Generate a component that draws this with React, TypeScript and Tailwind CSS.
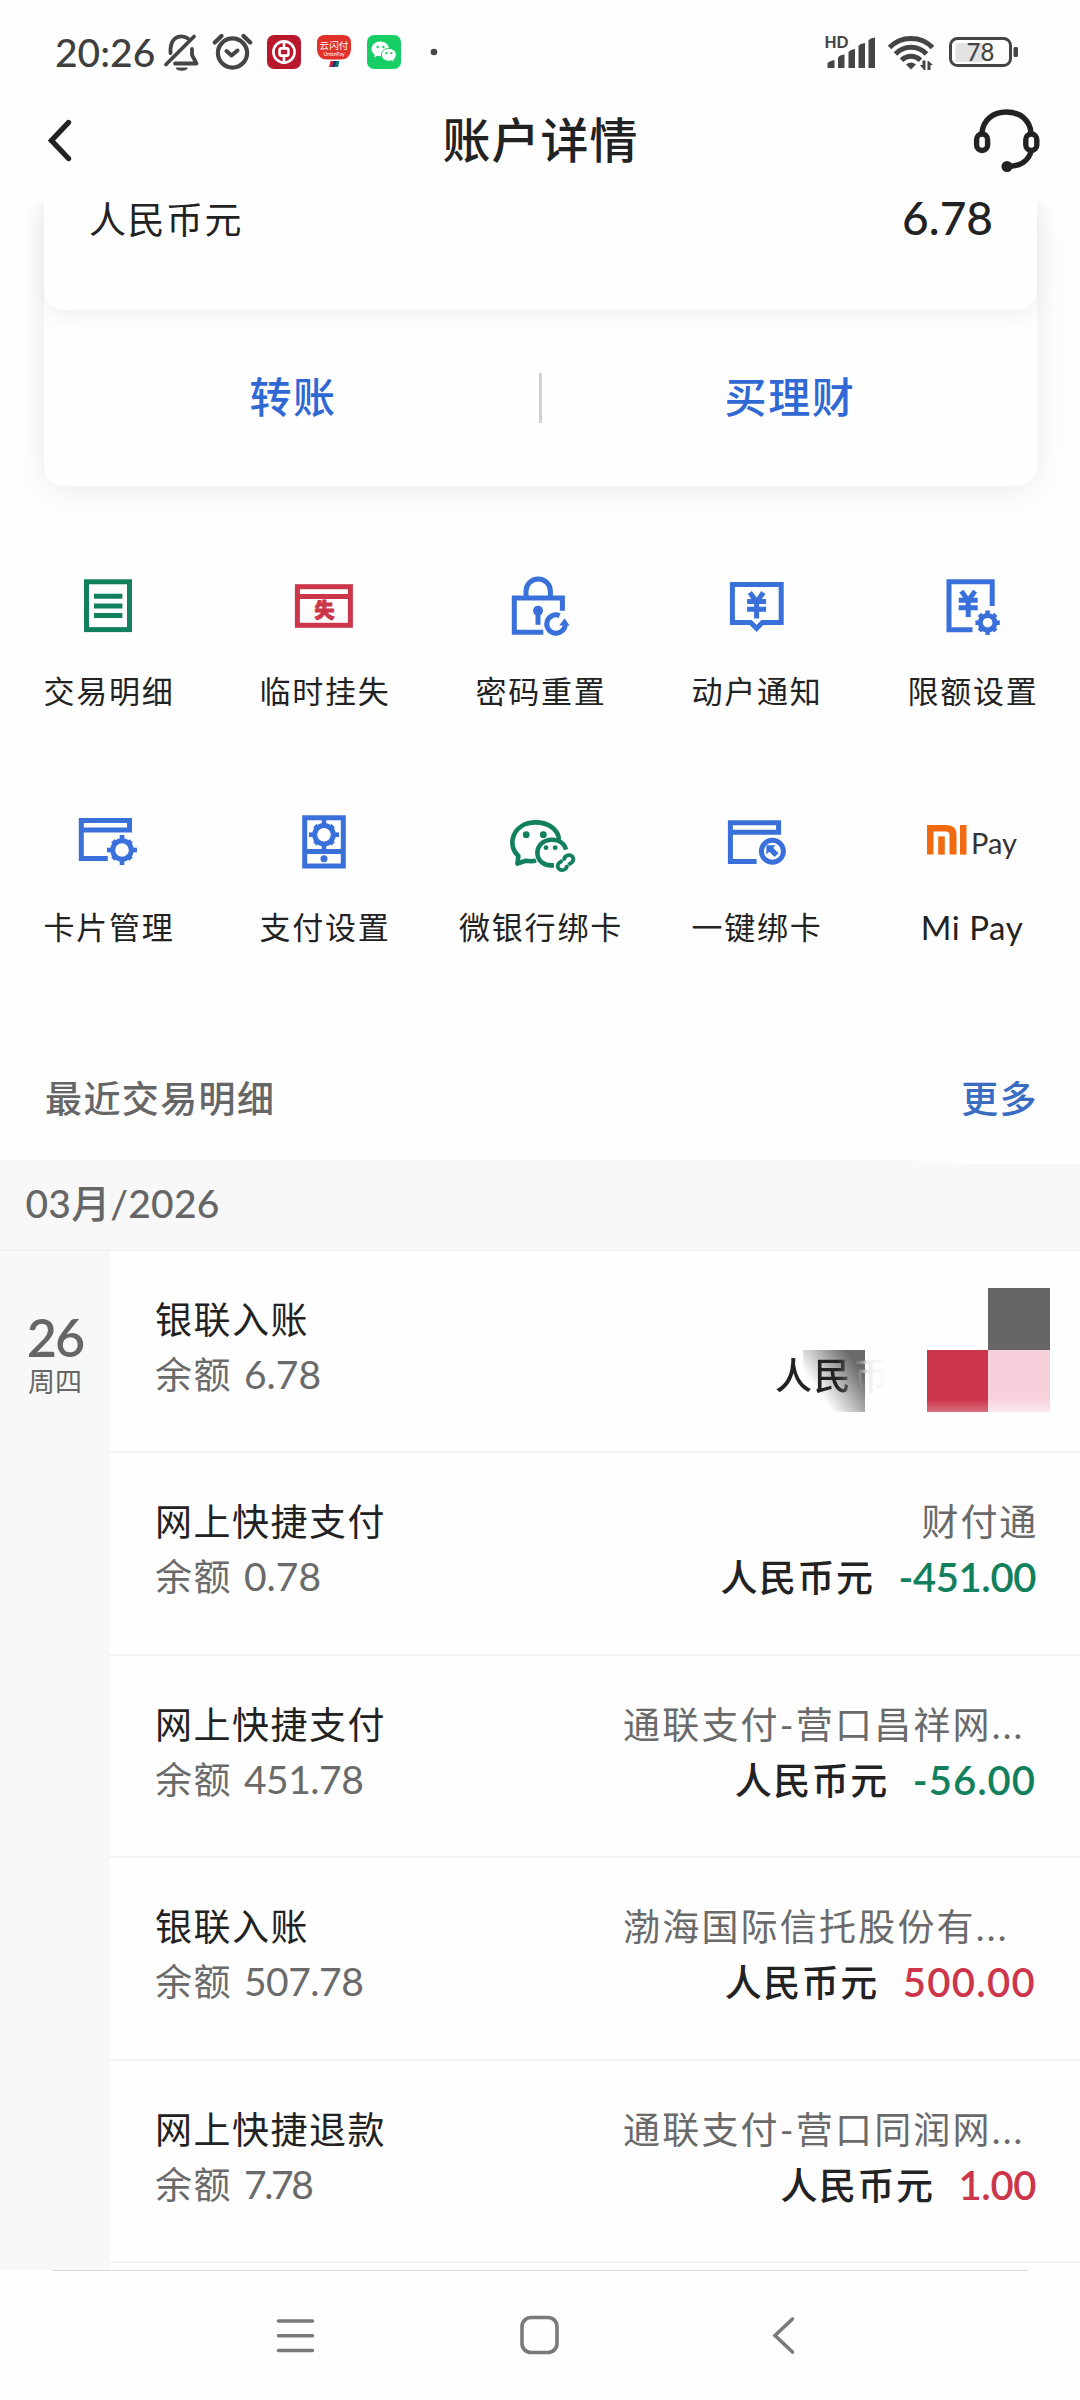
import React from "react";

const BLUE = "#3a70da";
const GREEN = "#12805e";
const RED = "#cc364b";

function Gear({ cx, cy, r, inner, tooth, outer }: { cx: number; cy: number; r: number; inner: number; tooth: number; outer: number }) {
  const mid = (r + inner) / 2;
  return (
    <g stroke={BLUE} fill="none">
      <circle cx={cx} cy={cy} r={mid} strokeWidth={r - inner} />
      {[0, 45, 90, 135, 180, 225, 270, 315].map((a) => (
        <line
          key={a}
          x1={cx}
          y1={cy - mid}
          x2={cx}
          y2={cy - (a % 90 === 0 ? outer : tooth)}
          strokeWidth={4.6}
          transform={`rotate(${a} ${cx} ${cy})`}
        />
      ))}
    </g>
  );
}

function Yen({ x, y }: { x: number; y: number }) {
  return (
    <g transform={`translate(${x} ${y})`} stroke={BLUE} strokeWidth={5} fill="none">
      <path d="M-6.8 -12.5 L0 -3 L6.8 -12.5 M0 -4 V13.5 M-9.5 -3.4 H9.5 M-9.5 4.2 H9.5" />
    </g>
  );
}

const icons: Record<string, React.ReactNode> = {
  detail: (
    <g stroke={GREEN} strokeWidth={5} fill="none">
      <rect x={10.5} y={7.8} width={43} height={47.8} />
      <path d="M18 22.3H46.4M18 32H46.4M18 41.5H46.4" />
    </g>
  ),
  lost: (
    <g>
      <rect x={5.4} y={12.7} width={53} height={38.6} stroke={RED} strokeWidth={5} fill="none" />
      <path d="M5.4 22.4H58.4" stroke={RED} strokeWidth={5} />
      <text x={32.5} y={44.4} textAnchor="middle" fontSize={20} fontWeight={900} fill={RED} stroke={RED} strokeWidth={0.9}>失</text>
    </g>
  ),
  lock: (
    <g stroke={BLUE} strokeWidth={5} fill="none">
      <path d="M54.4 36.7V24.1H6.3V58.3H35.3" />
      <path d="M18 24V17.2a12.2 12.2 0 0 1 24.4 0V24" />
      <circle cx={30} cy={36.7} r={5} fill={BLUE} stroke="none" />
      <path d="M30 38V50.8" />
      <path d="M51.6 41.6A9.2 9.2 0 1 0 57.2 50" />
      <path d="M56.6 44.2L61.6 51.4H51.2Z" fill={BLUE} stroke="none" />
    </g>
  ),
  notice: (
    <g>
      <path d="M8.4 10.4H57.2V48.4H38.4L32.6 54.4L26.6 48.4H8.4Z" stroke={BLUE} strokeWidth={5} fill="none" />
      <Yen x={32.6} y={31} />
    </g>
  ),
  limit: (
    <g>
      <path d="M52.2 32V7.7H9V55.7H32.5" stroke={BLUE} strokeWidth={5} fill="none" />
      <Yen x={28.2} y={29.6} />
      <Gear cx={47.6} cy={48.7} r={9.8} inner={4.8} tooth={11.6} outer={12.2} />
    </g>
  ),
  card: (
    <g>
      <path d="M31.8 48.6H5.3V10.4H53.5V19.9H5.3" stroke={BLUE} strokeWidth={5} fill="none" />
      <Gear cx={46} cy={40} r={11.8} inner={6.8} tooth={13} outer={15} />
    </g>
  ),
  pay: (
    <g>
      <path d="M12.7 7.7H51.3V55.9H12.7ZM12.7 41.5H51.3" stroke={BLUE} strokeWidth={5} fill="none" />
      <circle cx={32} cy={48.7} r={3.5} fill={BLUE} />
      <Gear cx={32} cy={24.7} r={11.8} inner={6.8} tooth={13} outer={15} />
    </g>
  ),
  wechat: (
    <g stroke={GREEN} strokeWidth={4.6} fill="none" strokeLinejoin="round">
      <path d="M28 50.4C25 51.6 20 51.2 17.6 50.8L9.4 53.6L10.4 46C-2 35 5 12.4 27.6 12.4C41 12.4 50.4 20 51 29.6" />
      <path d="M58 39.6C56.4 33.6 51 29.7 44 29.7C35 29.7 29.4 35.8 29.4 43C29.4 51 36.6 56.4 46 55.2" />
      <circle cx={18.2} cy={24.7} r={3.4} fill={GREEN} stroke="none" />
      <circle cx={35.3} cy={24.7} r={3.4} fill={GREEN} stroke="none" />
      <circle cx={38} cy={37.7} r={2.4} fill={GREEN} stroke="none" />
      <circle cx={47.2} cy={37.7} r={2.4} fill={GREEN} stroke="none" />
      <path d="M56.4 50.6C55.4 47.6 58.4 45 61.4 45.2C65.4 45.6 66.4 50 64 52.2L60.600 54.800" strokeWidth={3.800} />
      <path d="M58.600 54.800C59.600 58 56.800 60.400 53.600 60.200C49.600 59.600 48.600 55.400 51 53L54.400 50.400" strokeWidth={3.800} />
    </g>
  ),
  bind: (
    <g>
      <path d="M32.6 51.4H6.4V12.7H54.6V22.3H6.4" stroke={BLUE} strokeWidth={5} fill="none" />
      <circle cx={48.4} cy={41.3} r={11} stroke={BLUE} strokeWidth={5} fill="none" />
      <path d="M42.4 35.2H51.6L49.2 37.8L54.6 43.2L50.6 47L45.2 41.8L42.4 44.4Z" fill={BLUE} />
    </g>
  ),
};

function ServiceIcon({ name }: { name: string }) {
  if (name === "mipay") {
    return (
      <div className="flex h-16 w-[92px] items-start pt-[15px]">
        <svg width={40} height={30} viewBox="0 0 40 30" className="ml-[1px] shrink-0">
          <g fill="#f26a10">
            <path d="M0 0H19C26 0 29.500 3.400 29.500 9.600V29.600H22.500V10.500C22.500 7.500 21.500 6.500 18.600 6.500H6.500V29.600H0Z" />
            <rect x={11.200} y={11.400} width={6.600} height={18.200} />
            <rect x={33} y={0} width={6.500} height={29.600} />
          </g>
        </svg>
        <span className="ml-[4px] mt-[2px] text-[29px] leading-[32px] text-[#333]">Pay</span>
      </div>
    );
  }
  return (
    <svg width={64} height={64} viewBox="0 0 64 64" className="overflow-visible">
      {icons[name]}
    </svg>
  );
}

const services = [
  [
    ["detail", "交易明细"],
    ["lost", "临时挂失"],
    ["lock", "密码重置"],
    ["notice", "动户通知"],
    ["limit", "限额设置"],
  ],
  [
    ["card", "卡片管理"],
    ["pay", "支付设置"],
    ["wechat", "微银行绑卡"],
    ["bind", "一键绑卡"],
    ["mipay", "Mi Pay"],
  ],
];

const transactions = [
  { title: "银联入账", balance: "6.78", balanceFit: "", payee: "", amount: "", amountFit: "" },
  { title: "网上快捷支付", balance: "0.78", balanceFit: "", payee: "财付通", amount: "-451.00", amountFit: "text-[#12805c] tracking-[-0.4px]" },
  { title: "网上快捷支付", balance: "451.78", balanceFit: "tracking-[-0.5px]", payee: "通联支付-营口昌祥网...", amount: "-56.00", amountFit: "text-[#12805c] tracking-[1px]" },
  { title: "银联入账", balance: "507.78", balanceFit: "tracking-[-0.5px]", payee: "渤海国际信托股份有...", amount: "500.00", amountFit: "text-[#cc364b] tracking-[1.3px]" },
  { title: "网上快捷退款", balance: "7.78", balanceFit: "tracking-[-2.4px]", payee: "通联支付-营口同润网...", amount: "1.00", amountFit: "text-[#cc364b] tracking-[-0.4px]" },
];

function StatusBar() {
  return (
    <div className="flex h-[81px] items-start justify-between">
      <div className="flex items-start pl-[55px] pt-[31px]">
        <span className="w-[108px] text-[39px] font-medium leading-[42px] text-[#3f3f3f]">20:26</span>
        <svg width={290} height={44} viewBox="163 31 290 44">
          <g stroke="#454545" fill="none" strokeWidth={3.8} strokeLinecap="round" strokeLinejoin="round">
            <path d="M166 64.5L194 36.5" />
            <path d="M170.5 53V49C171 41 175 36.3 181.500 36.300C184 36.300 186 37 188 38.500" />
            <path d="M192 49V55L196.500 63.500H175" />
            <path d="M176.500 68.200H187C185.500 70.800 178 70.800 176.500 68.200Z" fill="#454545" strokeWidth={1.200} />
            <circle cx={232.5} cy={53} r={14.6} strokeWidth={4.2} />
            <path d="M226.500 51L231.500 55.500L237.500 50.500" strokeWidth={4} />
            <path d="M214.800 42.500L221.500 36M250.200 42.500L243.500 36" strokeWidth={4.4} />
          </g>
          <rect x={267} y={35} width={34} height={34} rx={7} fill="#b9182c" />
          <g stroke="#fff" fill="none" strokeWidth={2.6}>
            <circle cx={284} cy={52} r={10.6} />
            <rect x={279.6} y={48.4} width={8.8} height={7.2} rx={1.6} />
            <path d="M284 41V48.400M284 55.600V63" />
          </g>
          <path d="M317 43Q317 35 325 35H343Q351 35 351 43V50Q350 59.500 341 59.500H327Q318 59.500 317 50Z" fill="#e2312b" />
          <text x={334} y={48.6} textAnchor="middle" fontSize={9.6} fontWeight={400} fill="#fff">云闪付</text>
          <text x={334} y={55.6} textAnchor="middle" fontSize={5} fill="#fff">UnionPay</text>
          <path d="M330.500 61H334L332.500 67H329Z" fill="#c9223a" />
          <path d="M333.500 61H337L335.500 67H332Z" fill="#1c3a72" />
          <path d="M336.500 61H339.500L338 67H335Z" fill="#0e7a72" />
          <rect x={367} y={35} width={34} height={34} rx={7} fill="#15cf66" />
          <g fill="#fff">
            <path d="M380.300 41.500C375.400 41.500 371.600 44.800 371.600 48.900C371.600 51.200 372.800 53.200 374.700 54.600L374 57.400L377.200 55.800C378.200 56.100 379.200 56.200 380.300 56.200C385.200 56.200 389 52.900 389 48.900C389 44.800 385.200 41.500 380.300 41.500Z" />
            <path d="M388.800 48.400C384.600 48.400 381.400 51.200 381.400 54.800C381.400 58.400 384.600 61.200 388.800 61.200C389.800 61.200 390.700 61 391.500 60.800L394.300 62.200L393.700 59.800C395.300 58.600 396.300 56.800 396.300 54.800C396.300 51.200 393 48.400 388.800 48.400Z" stroke="#15cf66" strokeWidth={1} />
          </g>
          <g fill="#15cf66">
            <circle cx={377.600} cy={47} r={1.200} />
            <circle cx={383.400} cy={47} r={1.200} />
            <circle cx={386.400} cy={53.200} r={1.100} />
            <circle cx={391.400} cy={53.200} r={1.100} />
          </g>
          <circle cx={434} cy={52} r={3.300} fill="#454545" />
        </svg>
      </div>
      <svg width={200} height={44} viewBox="822 32 200 44" className="mr-[58px] mt-8">
        <text x={824.500} y={48} fontSize={16.500} fontWeight={900} fill="#454545" textLength={24} lengthAdjust="spacingAndGlyphs">HD</text>
        <g fill="#454545">
          <path d="M827.500 68V63.500Q829.500 60.500 834.500 60V68Z" />
          <path d="M838 68V57.500Q839.500 55 844.500 54.500V68Z" />
          <path d="M848.500 68V52Q850 49.500 855 49V68Z" />
          <path d="M858.500 68V46Q860 43.500 865 43V68Z" />
          <path d="M868.500 68V40.500Q870 38 875 37.500V68Z" />
          <path d="M906 64.500Q911 60.500 916 64.500L911 69.500Z" />
          <path d="M924 70L919.800 65H922.500V60.500H925.500V70ZM928.500 61L933 65H930.500V70H927.500V61Z" />
        </g>
        <g stroke="#454545" fill="none" strokeWidth={5}>
          <path d="M889.500 47.500C901 35.500 921 35.500 932.500 47.500" />
          <path d="M895.500 54C904 45 918 45 926.500 54" />
          <path d="M901.500 60.200C907 55 915 55 920.500 60.200" />
        </g>
        <rect x={955.500} y={43} width={28} height={19} rx={2} fill="#e2e2e2" />
        <rect x={950.500} y={38.500} width={60} height={27} rx={7} stroke="#454545" strokeWidth={3} fill="none" />
        <rect x={1013.500} y={47} width={4.500} height={10} rx={1.500} fill="#454545" />
        <text x={980.500} y={61} textAnchor="middle" fontSize={24} fontWeight={500} fill="#454545">78</text>
      </svg>
    </div>
  );
}

function Header() {
  return (
    <div className="grid h-[120px] grid-cols-3 items-center">
      <svg width={30} height={50} viewBox="0 0 30 50" className="mb-[3px] ml-[45px]">
        <path d="M23.500 7.500L6.500 25.500L23.500 43.500" stroke="#222" strokeWidth={5.400} fill="none" strokeLinecap="round" strokeLinejoin="miter" />
      </svg>
      <h1 className="pb-[3px] pl-[1px] text-center text-[48px] font-medium leading-[60px] tracking-[1px] text-[#222]">账户详情</h1>
      <svg width={76} height={72} viewBox="968 105 76 72" className="mr-[36px] justify-self-end">
        <g stroke="#222" fill="none" strokeWidth={5.400}>
          <path d="M982 133C983 120 993 112 1006.500 112C1020 112 1030 120 1031 133" />
          <rect x={976.600} y={134} width={11} height={16.500} rx={5.500} />
          <rect x={1025.800} y={134} width={11} height={16.500} rx={5.500} />
          <path d="M1031.500 150C1029 161 1020 166.500 1007 166.500" />
          <circle cx={1007} cy={166.500} r={5.500} fill="#222" stroke="none" />
        </g>
      </svg>
    </div>
  );
}

function AccountCard() {
  return (
    <div className="h-[344px] overflow-hidden pl-11 pr-[43px]">
      <div className="h-[285px] rounded-b-[20px] bg-[#fefefe] shadow-[0_4px_34px_rgba(0,0,0,0.08)]">
        <div className="flex h-[109px] items-start justify-between rounded-b-[20px] bg-[#fefefe] pl-[45px] pr-[44px] shadow-[0_6px_22px_rgba(0,0,0,0.055)]">
          <span className="text-[37px] leading-[37px] tracking-[1.5px] text-[#222]">人民币元</span>
          <span className="-mt-[6px] text-[46px] font-medium leading-[46px] text-[#222]">6.78</span>
        </div>
        <div className="flex h-[176px] items-center text-[42px] font-medium tracking-[1.6px] text-[#3068d4]">
          <div className="flex-1 pb-[2px] pl-[2px] text-center leading-[60px]">转账</div>
          <div className="h-[50px] w-[3px] -translate-x-px bg-[#d2d2d2]" />
          <div className="flex-1 pb-[2px] text-center leading-[60px]">买理财</div>
        </div>
      </div>
    </div>
  );
}

function Services() {
  return (
    <div className="h-[478px] pt-[29px]">
      {services.map((row, i) => (
        <div key={i} className="grid h-[236px] grid-cols-5">
          {row.map(([name, label]) => (
            <div key={name} className="flex flex-col items-center">
              <ServiceIcon name={name} />
              <span
                className={
                  name === "mipay"
                    ? "mt-[33px] whitespace-nowrap text-[33px] leading-[40px] tracking-[0.6px] text-[#222]"
                    : "mt-[33px] whitespace-nowrap pl-[2px] text-[31px] leading-[40px] tracking-[1.8px] text-[#222]"
                }
              >
                {label}
              </span>
            </div>
          ))}
        </div>
      ))}
    </div>
  );
}

/** Mosaic squares that hide the first entry's counterparty and amount. */
function Redaction() {
  return (
    <div className="absolute right-0 top-[-25px] h-[222px] w-[310px]">
      <div className="absolute right-0 top-0 h-[40px] w-[272px] bg-[linear-gradient(to_right,transparent,#fefefe_50px)]" />
      <div className="absolute left-[5px] top-[122px] text-[37px] font-medium leading-[55px] tracking-[1.8px]">
        <div className="absolute left-[28px] top-[2px] h-[62px] w-[62px] bg-[linear-gradient(55deg,#fefefe_28%,#6a6a6a_82%)]" />
        <span className="relative whitespace-nowrap bg-[linear-gradient(to_right,#222_62px,#666_78px,#999_88px,#ececec_92px,transparent_112px)] bg-clip-text text-transparent">人民币元</span>
      </div>
      <div className="absolute right-[30px] top-[62px] h-[62px] w-[62px] bg-[#666]" />
      <div className="absolute right-[92px] top-[124px] h-[62px] w-[61px] bg-[linear-gradient(#cc364b_80%,#d9707f)]" />
      <div className="absolute right-[30px] top-[124px] h-[62px] w-[62px] bg-[linear-gradient(#f6d1dc_78%,#fae8ee)]" />
    </div>
  );
}

function History() {
  return (
    <>
      <div className="flex h-[137px] items-center justify-between pl-[45px] pr-[42px] pt-[15px] text-[37px] font-medium">
        <span className="pb-[1px] leading-[50px] tracking-[1.4px] text-[#666]">最近交易明细</span>
        <span className="pb-[1px] leading-[50px] tracking-[1.4px] text-[#3a6cc2]">更多</span>
      </div>
      <div className="relative flex h-[91px] items-center border-b-2 border-[#f3f3f3] bg-[#f8f8f8] pb-[2px] pl-[25.5px] text-[39px] font-medium tracking-[0.2px] text-[#666]">
        03月/2026
        <div className="absolute right-0 top-0 h-[4px] w-[180px] bg-[linear-gradient(to_right,transparent,#fefefe_70px)]" />
      </div>
      <div className="flex h-[1019px] overflow-hidden">
        <div className="flex w-[110px] shrink-0 flex-col items-center bg-[#f8f8f8] pt-[60px] text-[#666]">
          <span className="text-[52px] font-semibold leading-[52px] tracking-[-2px]">26</span>
          <span className="mt-[1px] text-[27px] leading-[36px]">周四</span>
        </div>
        <div className="flex-1">
          {transactions.map((t, i) => (
            <div key={i} className="relative flex h-[202.4px] justify-between border-b-2 border-[#f3f3f3] pl-[45px] pr-[44px] pt-[41px]">
              <div className="whitespace-nowrap text-[37px] leading-[55px]">
                <div className="tracking-[1.5px] text-[#222]">{t.title}</div>
                <div className="flex text-[#6a6a6a]">
                  <span className="mr-[12px] tracking-[1.5px]">余额</span>
                  <span className={`text-[39px] ${t.balanceFit}`}>{t.balance}</span>
                </div>
              </div>
              {t.amount ? (
                <div className="flex flex-col items-end whitespace-nowrap text-[37px] leading-[55px]">
                  <div className={t.payee.length > 5 ? "w-[413px] tracking-[2.2px] text-[#6a6a6a]" : "-mr-[2px] tracking-[1.8px] text-[#6a6a6a]"}>{t.payee}</div>
                  <div className="flex pt-px font-medium">
                    <span className="mr-[24px] tracking-[1.5px] text-[#222]">人民币元</span>
                    <span className={`text-[40px] font-semibold ${t.amountFit}`}>{t.amount}</span>
                  </div>
                </div>
              ) : (
                <Redaction />
              )}
            </div>
          ))}
        </div>
      </div>
    </>
  );
}

function NavBar() {
  return (
    <div className="flex h-[130px] flex-col items-center">
      <div className="h-[1px] w-[976px] bg-[#dcdcdc]" />
      <div className="flex w-full justify-between px-[265px] pt-[34px]">
        <svg width={60} height={60} viewBox="0 0 60 60">
          <path d="M13.500 16H47.500M13.500 30.800H47.500M13.500 45.500H47.500" stroke="#7a7a7a" strokeWidth={3.600} strokeLinecap="round" />
        </svg>
        <svg width={60} height={60} viewBox="0 0 60 60">
          <rect x={12} y={12.500} width={35} height={35} rx={9} stroke="#7a7a7a" strokeWidth={3.600} fill="none" />
        </svg>
        <svg width={60} height={60} viewBox="0 0 60 60">
          <path d="M37.500 14L20 30.500L37.500 47" stroke="#7a7a7a" strokeWidth={3.600} strokeLinecap="round" fill="none" />
        </svg>
      </div>
    </div>
  );
}

export default function App() {
  return (
    <div className="h-[2400px] w-[1080px] overflow-hidden bg-[#fefefe] font-['Lato','Noto_Sans_CJK_SC',sans-serif]">
      <StatusBar />
      <Header />
      <AccountCard />
      <Services />
      <History />
      <NavBar />
    </div>
  );
}
